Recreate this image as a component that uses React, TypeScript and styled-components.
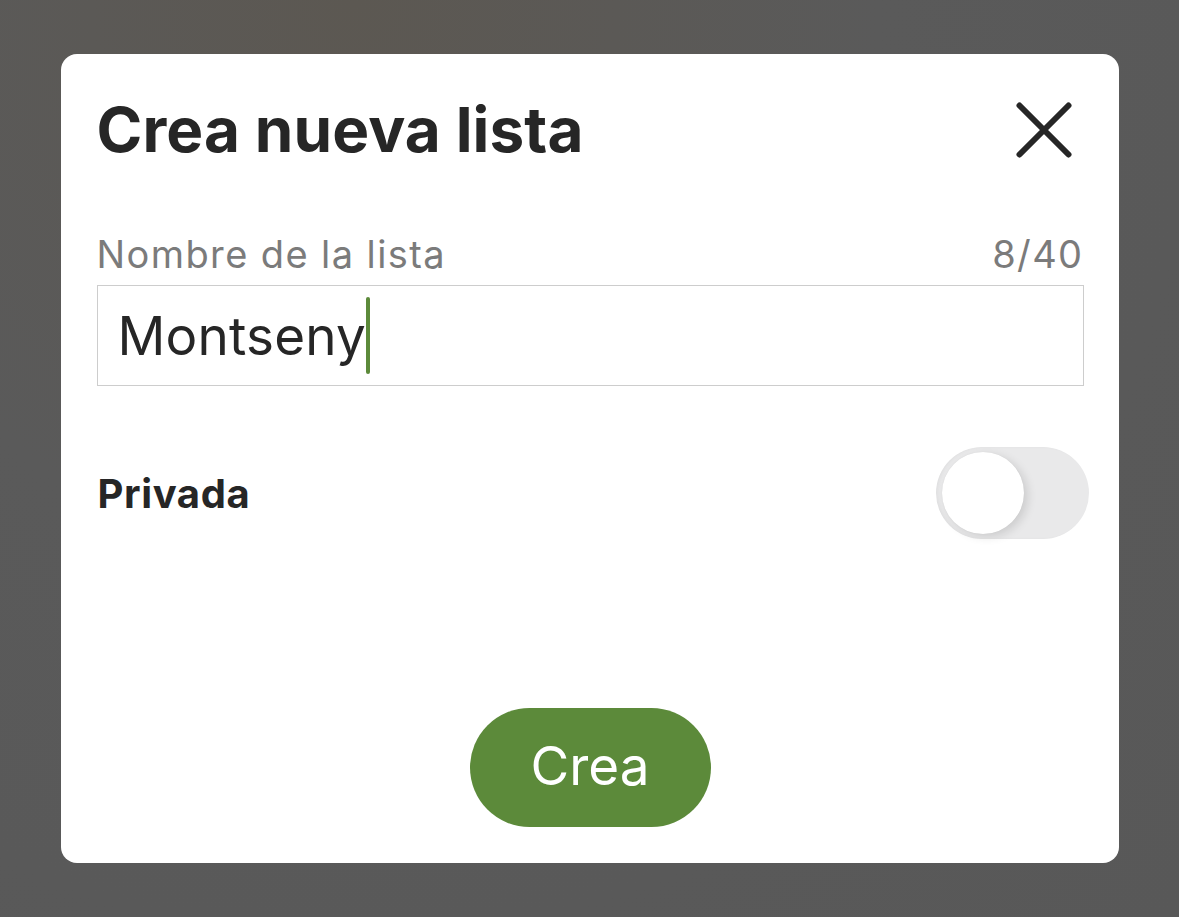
import React, { useState } from 'react';
import styled, { createGlobalStyle } from 'styled-components';

const GlobalStyle = createGlobalStyle`
  html, body {
    margin: 0;
    padding: 0;
    height: 100%;
  }
  body {
    font-family: Inter, "Noto Sans", "Liberation Sans", sans-serif;
    background: #5a5a5a;
  }
  #root {
    height: 100%;
  }
`;

const Overlay = styled.div`
  width: 100vw;
  height: 100vh;
  display: flex;
  align-items: center;
  justify-content: center;
  background: radial-gradient(ellipse at 30% 0%, #5c5852 0%, #5a5a5a 45%, #585858 100%);
`;

const Dialog = styled.div`
  width: 1058px;
  height: 809px;
  box-sizing: border-box;
  background: #ffffff;
  border-radius: 16px;
  padding: 39px 35px 36px 36px;
  display: flex;
  flex-direction: column;
`;

const Header = styled.div`
  display: flex;
  align-items: center;
  justify-content: space-between;
  height: 74px;
`;

const Title = styled.h2`
  margin: 0;
  font-size: 62px;
  font-weight: 700;
  letter-spacing: 0.1px;
  color: #262626;
  line-height: 74px;
`;

const CloseButton = styled.button`
  background: none;
  border: none;
  padding: 0;
  width: 60px;
  height: 60px;
  margin-right: 10px;
  display: flex;
  align-items: center;
  justify-content: center;
  cursor: pointer;
`;

const LabelRow = styled.div`
  display: flex;
  justify-content: space-between;
  align-items: center;
  margin-top: 65px;
  height: 44px;
  font-size: 38px;
  letter-spacing: 1.4px;
  color: #7b7b7b;
  padding-right: 0;
`;

const FieldBox = styled.div`
  margin-top: 9px;
  height: 101px;
  box-sizing: border-box;
  border: 1px solid #cdcdcd;
  padding: 0 20px;
  display: flex;
  align-items: center;
  font-size: 53px;
  letter-spacing: 0.2px;
  color: #262626;
`;

const Caret = styled.span`
  display: inline-block;
  width: 4px;
  height: 77px;
  margin-left: 0;
  border-radius: 2px;
  background: #5c8a3a;
  vertical-align: -19px;
`;

const OptionRow = styled.div`
  margin-top: 61px;
  margin-right: -5px;
  display: flex;
  align-items: center;
  justify-content: space-between;
`;

const OptionLabel = styled.span`
  font-size: 40px;
  font-weight: 700;
  letter-spacing: 0.6px;
  color: #262626;
  padding-left: 1px;
`;

const Switch = styled.button<{ $on: boolean }>`
  position: relative;
  width: 153px;
  height: 92px;
  border: none;
  border-radius: 46px;
  padding: 0;
  cursor: pointer;
  background: ${(p) => (p.$on ? '#5c8a3a' : '#e9e9ea')};
  box-shadow: inset 2px 0 3px rgba(0, 0, 0, 0.04);
`;

const Knob = styled.span<{ $on: boolean }>`
  position: absolute;
  top: 5px;
  left: ${(p) => (p.$on ? '66px' : '6px')};
  width: 82px;
  height: 82px;
  border-radius: 50%;
  background: #ffffff;
  box-shadow: 4px 3px 10px rgba(0, 0, 0, 0.12), 0 0 1px rgba(0, 0, 0, 0.08);
`;

const Footer = styled.div`
  margin-top: auto;
  display: flex;
  justify-content: center;
`;

const SubmitButton = styled.button`
  width: 241px;
  height: 119px;
  border: none;
  border-radius: 60px;
  background: #5c8a3a;
  color: #ffffff;
  font-family: Inter, "Noto Sans", sans-serif;
  font-size: 53px;
  font-weight: 400;
  cursor: pointer;
  padding: 0 0 4px;
`;

const CloseIcon = () => (
  <svg width="56" height="56" viewBox="0 0 56 56" fill="none">
    <path d="M3.5 3.5 L52.5 52.5 M52.5 3.5 L3.5 52.5" stroke="#262626" strokeWidth="6" strokeLinecap="round" />
  </svg>
);

export default function App() {
  const [name] = useState('Montseny');
  const [isPrivate, setPrivate] = useState(false);

  return (
    <>
      <GlobalStyle />
      <Overlay>
        <Dialog>
          <Header>
            <Title>Crea nueva lista</Title>
            <CloseButton aria-label="Cerrar">
              <CloseIcon />
            </CloseButton>
          </Header>

          <LabelRow>
            <span>Nombre de la lista</span>
            <span>{name.length}/40</span>
          </LabelRow>
          <FieldBox>
            <span>
              {name}
              <Caret />
            </span>
          </FieldBox>

          <OptionRow>
            <OptionLabel>Privada</OptionLabel>
            <Switch $on={isPrivate} onClick={() => setPrivate(!isPrivate)}>
              <Knob $on={isPrivate} />
            </Switch>
          </OptionRow>

          <Footer>
            <SubmitButton>Crea</SubmitButton>
          </Footer>
        </Dialog>
      </Overlay>
    </>
  );
}
